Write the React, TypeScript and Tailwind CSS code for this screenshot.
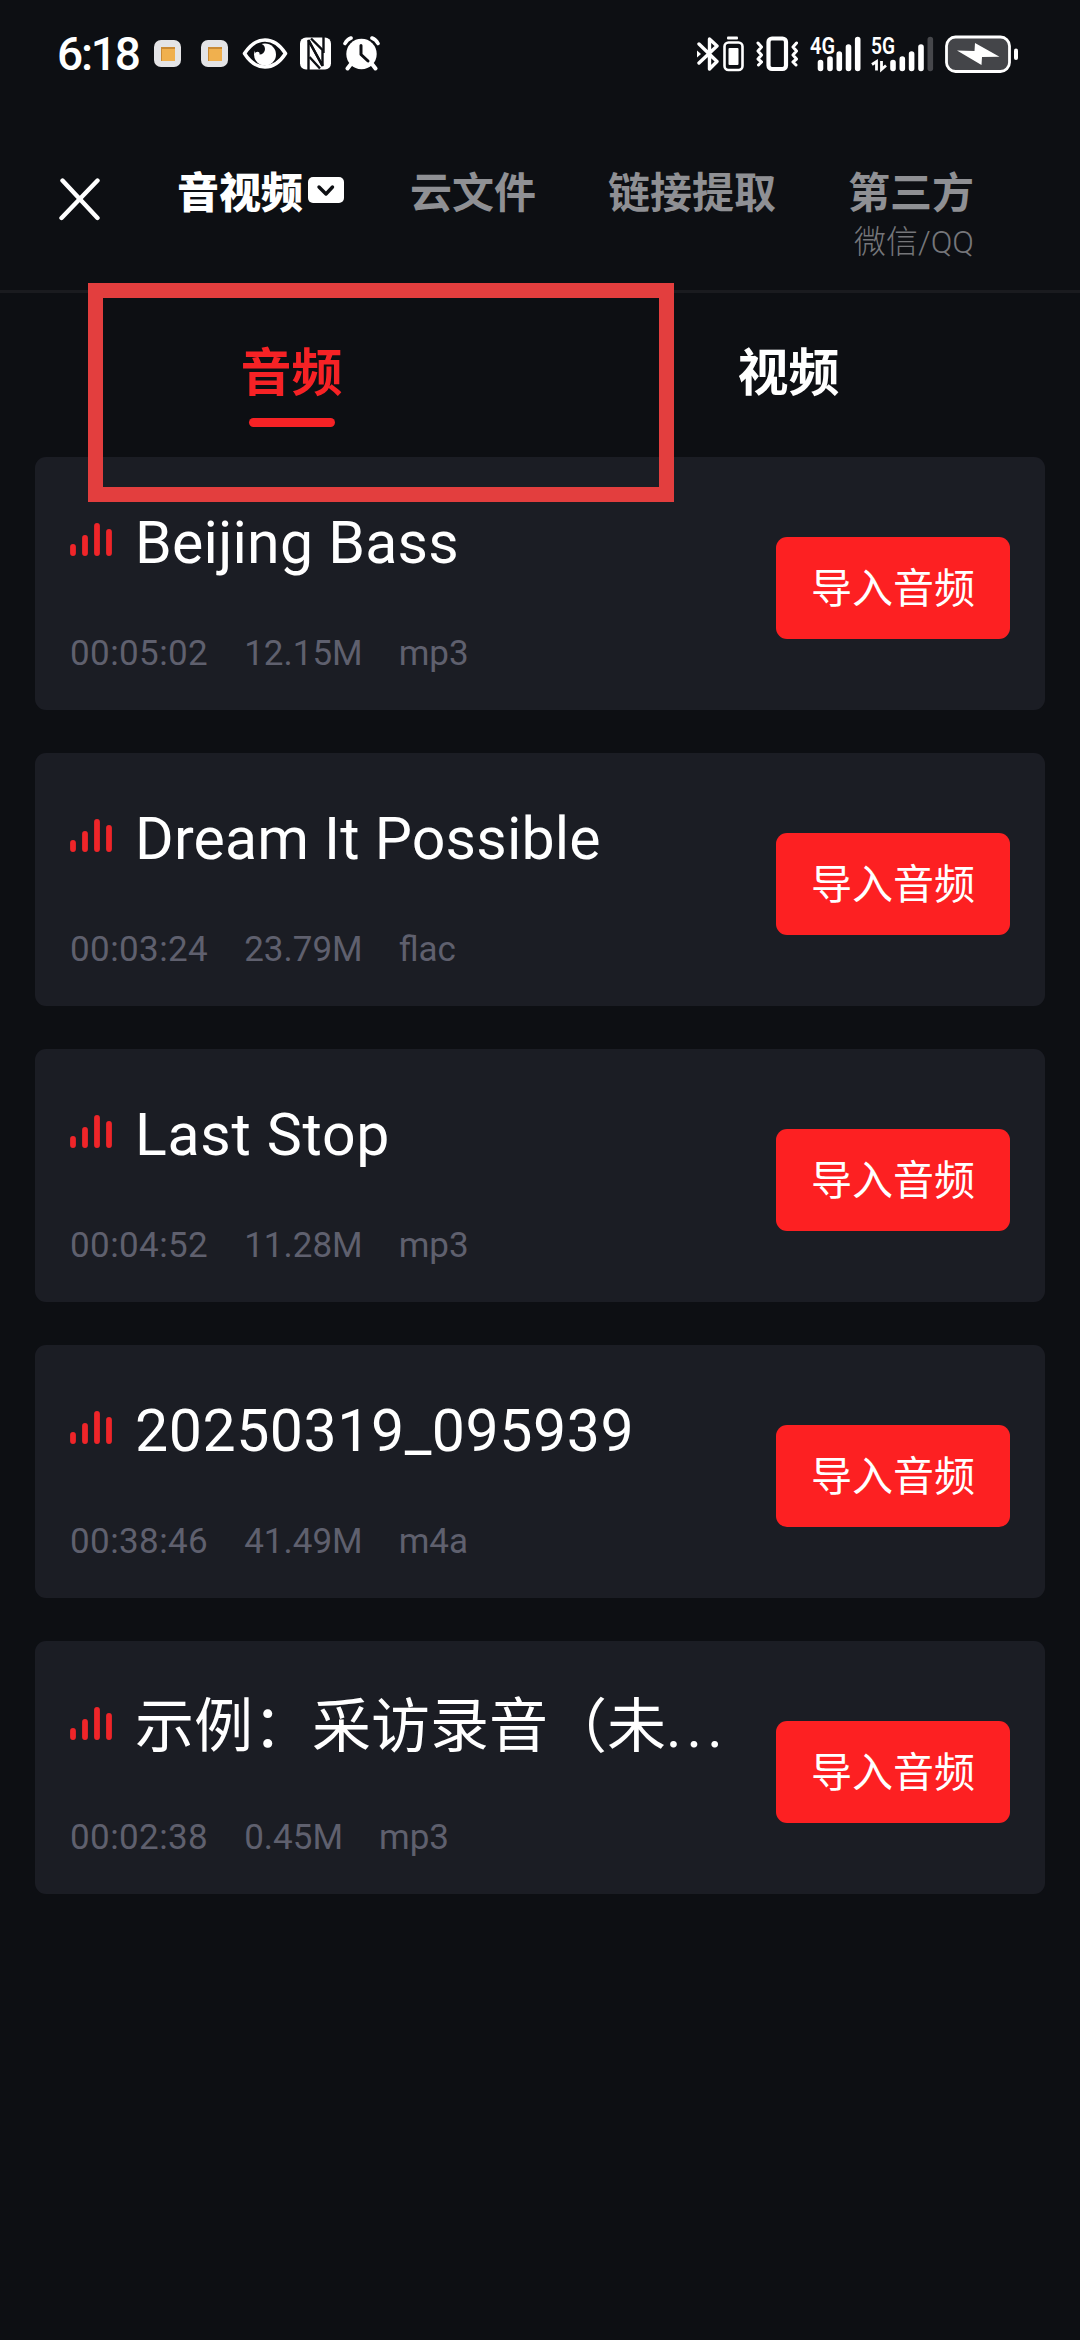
import { useState } from 'react'
import clsx from 'clsx'

type AudioFile = {
  title: string
  ellipsis?: boolean
  titleClass: string
  duration: string
  size: string
  format: string
}

const FILES: AudioFile[] = [
  { title: 'Beijing Bass', titleClass: 'tracking-[0.25px]', duration: '00:05:02', size: '12.15M', format: 'mp3' },
  { title: 'Dream It Possible', titleClass: 'tracking-[0.2px]', duration: '00:03:24', size: '23.79M', format: 'flac' },
  { title: 'Last Stop', titleClass: 'tracking-[0.7px]', duration: '00:04:52', size: '11.28M', format: 'mp3' },
  { title: '20250319_095939', titleClass: 'tracking-[0.55px]', duration: '00:38:46', size: '41.49M', format: 'm4a' },
  { title: '示例：采访录音（未', ellipsis: true, titleClass: 'tracking-normal', duration: '00:02:38', size: '0.45M', format: 'mp3' },
]

function AppBadge() {
  return (
    <div className="flex h-[27px] w-[27px] items-center justify-center rounded-[7px] bg-[#e4e4e6]">
      <div className="h-[14px] w-[14px] border-t-2 border-l border-[#c98a35] bg-[#f0b04e]" />
    </div>
  )
}

function StatusBar() {
  return (
    <div className="flex h-[107px] items-start pt-[34px] pl-[57px] text-white">
      <div className="flex h-[40px] w-[97px] items-center text-[46px] leading-none font-medium tracking-[-2.2px]">6:18</div>
      <div className="flex h-[39px] items-center">
        <AppBadge />
        <div className="ml-[20px]">
          <AppBadge />
        </div>
        <svg className="ml-[14px]" width="46" height="33" viewBox="0 0 46 33">
          <path d="M2.500 16.500C8 8 15 3 23 3s15 5 20.500 13.500C38 25 31 30 23 30S8 25 2.500 16.500Z" fill="none" stroke="#fff" strokeWidth="3.600" strokeLinejoin="round" />
          <circle cx="23" cy="17.500" r="11" fill="#fff" />
          <circle cx="17.500" cy="12" r="5.500" fill="#0d0f13" />
          <circle cx="15.500" cy="17" r="2.200" fill="#fff" />
        </svg>
        <svg className="ml-[12px]" width="31" height="33" viewBox="0 0 31 33">
          <rect x="0" y="0.500" width="31" height="32" rx="6" fill="#fff" />
          <path d="M8.500 33V3L22.500 29V13L11 1.500" fill="none" stroke="#0d0f13" strokeWidth="2.400" />
          <path d="M8.500 3.500 22.500 28.500M9.500 20 20 31.500M23.500 0v16" fill="none" stroke="#0d0f13" strokeWidth="2.400" />
        </svg>
        <svg className="ml-[12px]" width="37" height="35" viewBox="0 0 37 35">
          <circle cx="18.500" cy="18" r="15.200" fill="#fff" />
          <path d="M2 7.500Q4 3.500 8 2M35 7.500Q33 3.500 29 2" fill="none" stroke="#fff" strokeWidth="3.600" strokeLinecap="round" />
          <path d="M8 28l-3.500 4.500M29 28l3.500 4.500" stroke="#fff" strokeWidth="4" strokeLinecap="round" />
          <path d="M18 9.500v9l7 6.500" fill="none" stroke="#0d0f13" strokeWidth="3" strokeLinecap="round" strokeLinejoin="round" />
        </svg>
      </div>
      <div className="mr-[61px] ml-auto flex h-[39px] items-center">
        <svg width="48" height="36" viewBox="0 0 48 36">
          <path d="M2 8 20 25.500 12.500 33V3L20 10 2 27" fill="none" stroke="#fff" strokeWidth="3.400" strokeLinejoin="round" strokeLinecap="round" />
          <path d="M0 14.500l4 3.500-4 3.500Z" fill="#fff" />
          <rect x="30" y="0.500" width="11" height="3" rx="1" fill="#fff" />
          <rect x="27.500" y="6.500" width="18" height="27.500" rx="4" fill="none" stroke="#fff" strokeWidth="2.600" />
          <rect x="31.500" y="12" width="10" height="17" rx="1" fill="#fff" />
        </svg>
        <svg className="ml-[11px]" width="43" height="36" viewBox="0 0 43 36">
          <rect x="12.500" y="2.500" width="17.500" height="30.500" rx="3.500" fill="none" stroke="#fff" strokeWidth="4.200" />
          <path d="M2 7l3.500 4-3.500 4 3.500 4-3.500 4 3.500 3-3 3M40.500 7 37 11l3.500 4-3.500 4 3.500 4-3.500 3 3 3" fill="none" stroke="#fff" strokeWidth="3" strokeLinejoin="round" strokeLinecap="round" />
        </svg>
        <svg className="ml-[11px] overflow-visible" width="52" height="36" viewBox="0 0 52 36">
          <text x="0" y="17.500" fontSize="23" fontWeight="600" fill="#fff" textLength="25" lengthAdjust="spacingAndGlyphs">4G</text>
          <path d="M10.500 26.500v6M20 23v9.500M29.300 18v14.500M38.500 11v21.500M47.700 3.500v29" stroke="#fff" strokeWidth="5.600" strokeLinecap="round" />
        </svg>
        <svg className="ml-[9px] overflow-visible" width="63" height="36" viewBox="0 0 63 36">
          <text x="0" y="17.500" fontSize="23" fontWeight="600" fill="#fff" textLength="24" lengthAdjust="spacingAndGlyphs">5G</text>
          <path d="M1 28.500 5.500 25.500v9M10.500 25v8.500l4.500-4" fill="none" stroke="#fff" strokeWidth="2.800" />
          <path d="M22 26.500v6M31.300 23v9.500M40.600 18v14.500M50 11v21.500" stroke="#fff" strokeWidth="5.600" strokeLinecap="round" />
          <path d="M59.300 3.500v29" stroke="#46474b" strokeWidth="5.600" strokeLinecap="round" />
        </svg>
        <svg className="ml-[11px]" width="74" height="38" viewBox="0 0 74 38">
          <rect x="1.500" y="2" width="63" height="34.500" rx="9" fill="#444549" stroke="#fff" strokeWidth="2.800" />
          <path d="M12 15.500 29.500 16 30 8 54.500 21.800 37 22 36.500 30Z" fill="#fff" />
          <rect x="69" y="13.500" width="4" height="11.500" rx="2" fill="#fff" />
        </svg>
      </div>
    </div>
  )
}

function NavTabs() {
  return (
    <div className="flex h-[183px] items-start text-[42px] leading-[60px] font-bold text-[#8f9094]">
      <button className="mt-[70px] ml-[58px]" aria-label="close">
        <svg width="44" height="44" viewBox="0 0 44 44">
          <path d="M4.500 3.500 39.500 41M39.500 3.500 3.500 41" stroke="#fff" strokeWidth="4.400" strokeLinecap="round" />
        </svg>
      </button>
      <div className="mt-[57px] ml-[75px] flex w-[233px] items-start font-black text-white">
        音视频
        <svg className="mt-[13px] ml-[5px]" width="36" height="26" viewBox="0 0 36 26">
          <rect width="36" height="26" rx="5" fill="#fff" />
          <path d="M11 10l7 7 6.500-7" fill="none" stroke="#0d0f13" strokeWidth="3.400" strokeLinecap="round" strokeLinejoin="round" />
        </svg>
      </div>
      <div className="mt-[57px] w-[198px]">云文件</div>
      <div className="mt-[57px] w-[240px]">链接提取</div>
      <div className="mt-[57px] flex w-[126px] flex-col">
        <span>第三方</span>
        <span className="self-end text-[32px] leading-[37px] font-light whitespace-nowrap text-[#75767a]">微信/QQ</span>
      </div>
    </div>
  )
}

function FileCard({ file }: { file: AudioFile }) {
  return (
    <div className="flex h-[253px] items-start justify-between rounded-[11px] bg-[#1b1d24] px-[35px]">
      <div className="flex flex-col">
        <div className="mt-[50px] flex h-[72px] items-start">
          <svg className="mt-[16px]" width="42" height="34" viewBox="0 0 42 34">
            <path d="M3 24v6M15 15v15M27 3v27M39 9v21" stroke="#ef2529" strokeWidth="5.800" strokeLinecap="round" />
          </svg>
          <div className={clsx('ml-[23px] flex text-[59px] leading-[72px] whitespace-nowrap text-white', file.titleClass)}>
            {file.title}
            {file.ellipsis && <span className="tracking-[5px]">...</span>}
          </div>
        </div>
        <div className="mt-[53px] flex gap-[36px] text-[35px] leading-[44px] text-[#5f606e]">
          <span className="tracking-[0.4px]">{file.duration}</span>
          <span>{file.size}</span>
          <span>{file.format}</span>
        </div>
      </div>
      <button className="mt-[80px] h-[102px] w-[234px] rounded-[11px] bg-[#fd2022] text-[41px] leading-[104px] text-white">导入音频</button>
    </div>
  )
}

export default function App() {
  const [tab, setTab] = useState<'audio' | 'video'>('audio')

  return (
    <div className="relative h-[2340px] w-[1080px] overflow-hidden bg-[#0d0f13] font-[Roboto,'Noto_Sans_CJK_SC',sans-serif]">
      <StatusBar />
      <NavTabs />
      <div className="h-[3px] bg-[#1a1b1f]" />

      <div className="grid h-[164px] grid-cols-2 px-[43px] pt-[43px] text-[51px] leading-[76px] font-bold text-white">
        <button className="flex flex-col items-center" onClick={() => setTab('audio')}>
          <span className={clsx(tab === 'audio' && 'text-[#f62225]')}>音频</span>
          {tab === 'audio' && <div className="mt-[6px] h-[9px] w-[86px] rounded-full bg-[#f62225]" />}
        </button>
        <button className="flex flex-col items-center" onClick={() => setTab('video')}>
          <span className={clsx(tab === 'video' && 'text-[#f62225]')}>视频</span>
          {tab === 'video' && <div className="mt-[6px] h-[9px] w-[86px] rounded-full bg-[#f62225]" />}
        </button>
      </div>

      <div className="flex flex-col gap-[43px] px-[35px]">
        {FILES.map((file) => (
          <FileCard key={file.title} file={file} />
        ))}
      </div>

      {/* highlight around the audio tab */}
      <div className="pointer-events-none absolute top-[283px] left-[88px] h-[219px] w-[586px] border-[15px] border-[#e33e3e]" />
    </div>
  )
}
